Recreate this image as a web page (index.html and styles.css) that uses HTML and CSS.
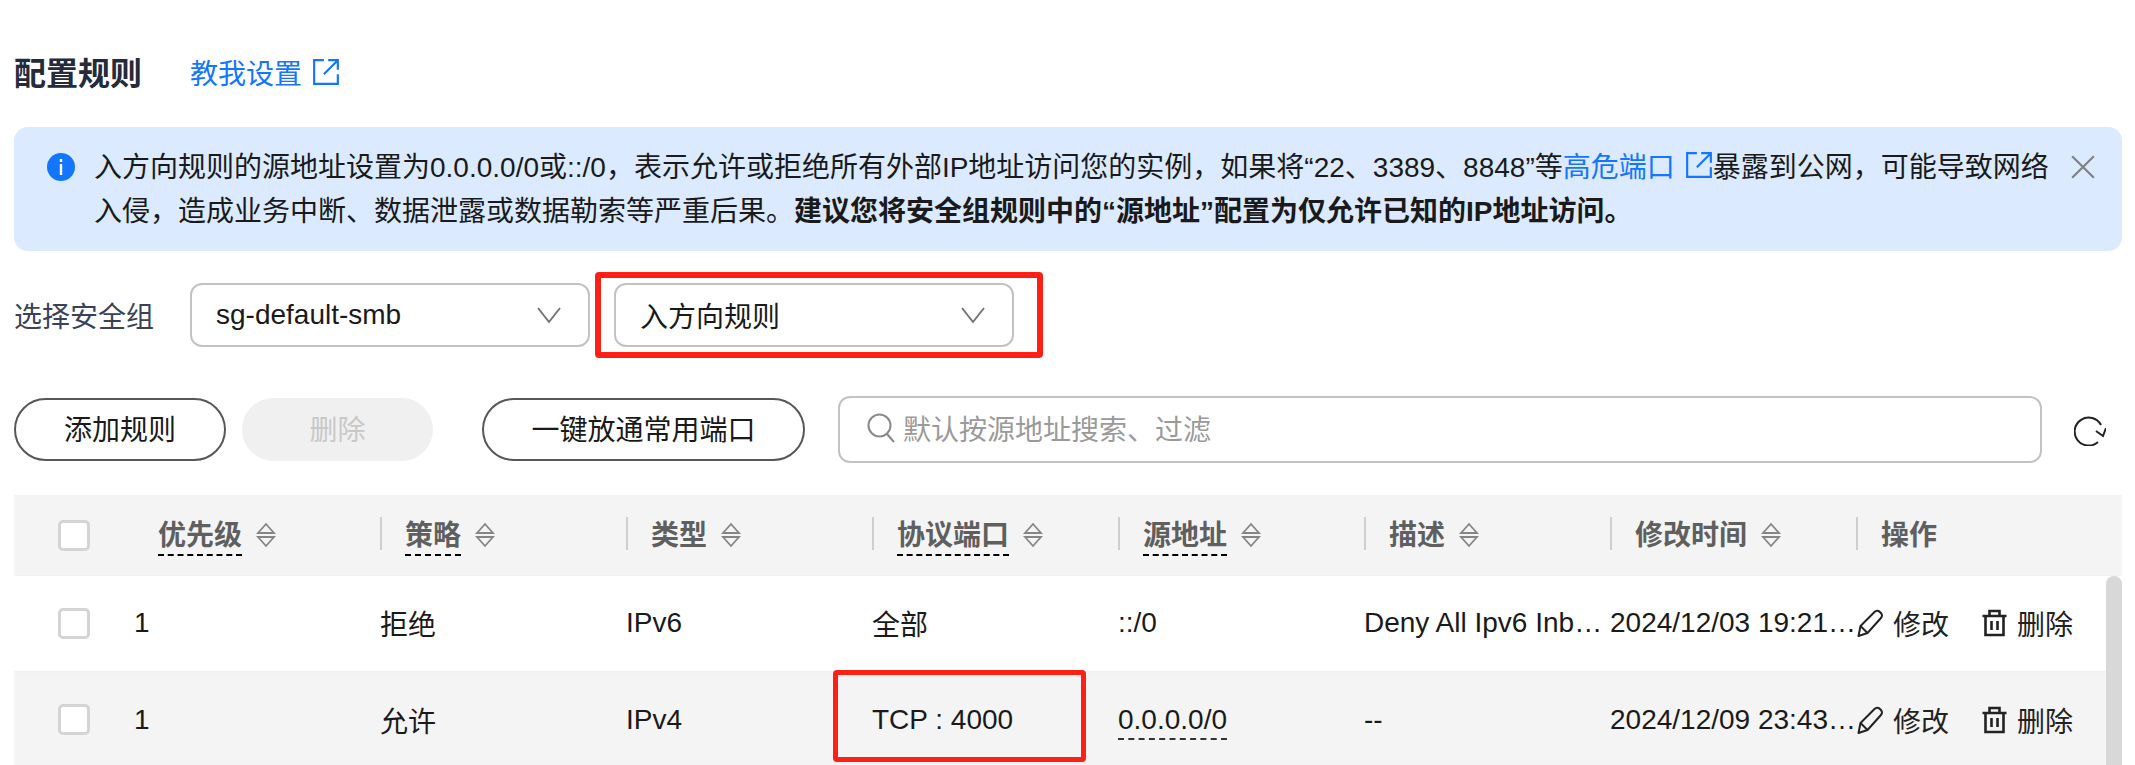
FILE: index.html
```html
<!DOCTYPE html>
<html lang="zh-CN">
<head>
    <meta charset="UTF-8">
    <title>配置规则</title>
    <link rel="stylesheet" href="styles.css">
</head>
<body>
    <svg class="defs" width="0" height="0" aria-hidden="true">
        <symbol id="i-ext" viewBox="0 0 26 26">
            <path d="M11 2H2v22h22v-9" fill="none" stroke="currentColor" stroke-width="2"/>
            <path d="M11 15 24 2M15 2h9v9" fill="none" stroke="currentColor" stroke-width="2"/>
        </symbol>
        <symbol id="i-sort" viewBox="0 0 20 26">
            <path d="M2 11 10 2l8 9zM2 15l8 9 8-9z" fill="none" stroke="#858585" stroke-width="1.8"/>
        </symbol>
        <symbol id="i-down" viewBox="0 0 26 18">
            <path d="M2 2l11 14L24 2" fill="none" stroke="#757575" stroke-width="2"/>
        </symbol>
        <symbol id="i-pen" viewBox="0 0 26 28">
            <path d="M1 27l2-10L17 3c2-2 4-1.500 6 .5s2 4 0 6L10 24z" fill="none" stroke="currentColor" stroke-width="2" stroke-linejoin="round"/>
            <path d="M3 17l7 7" fill="none" stroke="currentColor" stroke-width="2"/>
        </symbol>
        <symbol id="i-trash" viewBox="0 0 26 28">
            <path d="M1 7h24M8 7V2h10v5M4 7v19h18V7M10 12v9M16 12v9" fill="none" stroke="currentColor" stroke-width="2.600"/>
        </symbol>
    </svg>

    <div class="page">
        <div class="title-row">
            <h2>配置规则</h2>
            <a class="link" href="#">教我设置<svg class="ext"><use href="#i-ext"/></svg></a>
        </div>

        <div class="notice">
            <svg class="info" viewBox="0 0 28 28">
                <circle cx="14" cy="14" r="14" fill="#1476ff"/>
                <rect x="12.800" y="6" width="2.400" height="3" fill="#fff"/>
                <rect x="12.800" y="11" width="2.400" height="11" fill="#fff"/>
            </svg>
            <p>入方向规则的源地址设置为0.0.0.0/0或::/0，表示允许或拒绝所有外部IP地址访问您的实例，如果将“22、3389、8848”等<a class="link" href="#">高危端口<svg class="ext"><use href="#i-ext"/></svg></a>暴露到公网，可能导致网络入侵，造成业务中断、数据泄露或数据勒索等严重后果。<b>建议您将安全组规则中的“源地址”配置为仅允许已知的IP地址访问。</b></p>
            <svg class="close" viewBox="0 0 24 24">
                <path d="M2 2l20 20M22 2 2 22" fill="none" stroke="#808080" stroke-width="2"/>
            </svg>
        </div>

        <div class="filters">
            <label>选择安全组</label>
            <div class="select">sg-default-smb<svg><use href="#i-down"/></svg></div>
            <div class="select marked">入方向规则<svg><use href="#i-down"/></svg></div>
        </div>

        <div class="toolbar">
            <button class="btn btn-add">添加规则</button>
            <button class="btn btn-del" disabled>删除</button>
            <button class="btn btn-open">一键放通常用端口</button>
            <div class="search">
                <svg viewBox="0 0 28 30">
                    <circle cx="12.500" cy="12.500" r="11" fill="none" stroke="#8a8a8a" stroke-width="2"/>
                    <path d="M20 21l7 8" fill="none" stroke="#8a8a8a" stroke-width="2"/>
                </svg>
                默认按源地址搜索、过滤
            </div>
            <svg class="refresh" viewBox="0 0 32 30">
                <path d="M27 9A14 14 0 1 0 24 26" fill="none" stroke="#222" stroke-width="2"/>
                <path d="M22 15l7 5 3-8" fill="none" stroke="#222" stroke-width="2"/>
            </svg>
        </div>

        <div class="table-wrap">
            <table>
                <colgroup>
                    <col class="col-check">
                    <col class="col">
                    <col class="col">
                    <col class="col">
                    <col class="col">
                    <col class="col">
                    <col class="col">
                    <col class="col">
                    <col>
                </colgroup>
                <thead>
                    <tr>
                        <th><span class="check"></span></th>
                        <th class="first"><div class="th-in"><span class="tip">优先级</span><svg class="sort"><use href="#i-sort"/></svg></div></th>
                        <th><div class="th-in"><span class="tip">策略</span><svg class="sort"><use href="#i-sort"/></svg></div></th>
                        <th><div class="th-in"><span class="tip plain">类型</span><svg class="sort"><use href="#i-sort"/></svg></div></th>
                        <th><div class="th-in"><span class="tip">协议端口</span><svg class="sort"><use href="#i-sort"/></svg></div></th>
                        <th><div class="th-in"><span class="tip">源地址</span><svg class="sort"><use href="#i-sort"/></svg></div></th>
                        <th><div class="th-in"><span class="tip plain">描述</span><svg class="sort"><use href="#i-sort"/></svg></div></th>
                        <th><div class="th-in"><span class="tip plain">修改时间</span><svg class="sort"><use href="#i-sort"/></svg></div></th>
                        <th><div class="th-in"><span class="tip plain">操作</span></div></th>
                    </tr>
                </thead>
                <tbody>
                    <tr>
                        <td><span class="check"></span></td>
                        <td>1</td>
                        <td>拒绝</td>
                        <td>IPv6</td>
                        <td>全部</td>
                        <td>::/0</td>
                        <td>Deny All Ipv6 Inbound</td>
                        <td>2024/12/03 19:21:30 GMT+08:00</td>
                        <td>
                            <div class="actions">
                                <a><svg><use href="#i-pen"/></svg>修改</a>
                                <a><svg><use href="#i-trash"/></svg>删除</a>
                            </div>
                        </td>
                    </tr>
                    <tr>
                        <td><span class="check"></span></td>
                        <td>1</td>
                        <td>允许</td>
                        <td>IPv4</td>
                        <td class="marked-cell">TCP : 4000</td>
                        <td><span class="tip tip-cell">0.0.0.0/0</span></td>
                        <td>--</td>
                        <td>2024/12/09 23:43:12 GMT+08:00</td>
                        <td>
                            <div class="actions">
                                <a><svg><use href="#i-pen"/></svg>修改</a>
                                <a><svg><use href="#i-trash"/></svg>删除</a>
                            </div>
                        </td>
                    </tr>
                </tbody>
            </table>
            <div class="scrollbar"></div>
        </div>
    </div>
</body>
</html>
```

FILE: styles.css
```css
:root {
    --blue: #1476ff;
    --ink: #1a1a1a;
    --line: #c2c2c2;
    --red: #ff2015;
}

html, body {
    margin: 0;
    height: 100%;
    overflow: hidden;
}

body {
    background: #fff;
    color: var(--ink);
    font-family: "Liberation Sans", "Noto Sans CJK SC", sans-serif;
    font-size: 28px;
}

.defs {
    position: absolute;
}

.page {
    padding: 50px 13px 0 14px;
}

/* title */
.title-row {
    display: flex;
    align-items: center;
    height: 44px;
}

h2 {
    margin: 0 48px 3px 0;
    font-size: 32px;
    font-weight: 700;
    color: #252b3a;
}

.link {
    color: var(--blue);
    text-decoration: none;
}

.ext {
    width: 28px;
    height: 28px;
    margin-left: 10px;
    vertical-align: -2px;
}

/* notice */
.notice {
    display: flex;
    align-items: flex-start;
    height: 124px;
    margin-top: 33px;
    padding: 19px 26px 0 33px;
    box-sizing: border-box;
    background: #dbeaff;
    border-radius: 14px;
}

.notice p {
    flex: 1;
    margin: 0;
    line-height: 44px;
}

.info {
    flex: none;
    width: 28px;
    height: 28px;
    margin: 7px 19px 0 0;
}

.close {
    flex: none;
    width: 26px;
    height: 26px;
    margin: 8px 0 0 16px;
}

/* filters */
.filters {
    display: flex;
    align-items: center;
    margin-top: 32px;
}

.filters label {
    width: 176px;
    color: #3a4257;
}

.select {
    display: flex;
    align-items: center;
    justify-content: space-between;
    box-sizing: border-box;
    width: 400px;
    height: 64px;
    padding: 0 26px 0 24px;
    border: 2px solid var(--line);
    border-radius: 12px;
}

.select svg {
    width: 26px;
    height: 18px;
}

.marked {
    position: relative;
    margin-left: 24px;
}

.marked::after {
    content: "";
    position: absolute;
    inset: -13px -31px -13px -21px;
    border: 6px solid var(--red);
    border-radius: 4px;
}

/* toolbar */
.toolbar {
    display: flex;
    align-items: center;
    margin-top: 49px;
}

.btn {
    height: 63px;
    padding: 0 0 3px;
    font: inherit;
    color: var(--ink);
    background: #fff;
    border: 2px solid #575757;
    border-radius: 32px;
}

.btn-add {
    width: 212px;
    margin-right: 16px;
}

.btn-del {
    width: 191px;
    margin-right: 49px;
    color: #c8c8c8;
    background: #f0f0f0;
    border-color: #f0f0f0;
}

.btn-open {
    width: 323px;
}

.search {
    display: flex;
    align-items: center;
    box-sizing: border-box;
    width: 1204px;
    height: 67px;
    margin-left: 33px;
    padding: 0 0 3px 27px;
    color: #9a9a9a;
    border: 2px solid var(--line);
    border-radius: 12px;
}

.search svg {
    width: 28px;
    height: 30px;
    margin-right: 8px;
}

.refresh {
    width: 32px;
    height: 30px;
    margin: 3px 0 0 32px;
}

/* table */
.table-wrap {
    position: relative;
    margin-top: 32px;
}

table {
    width: 100%;
    table-layout: fixed;
    border-collapse: collapse;
}

.col-check {
    width: 120px;
}

.col {
    width: 246px;
}

th {
    position: relative;
    height: 80px;
    padding: 0 0 0 25px;
    text-align: left;
    font-weight: 700;
    color: #5f5f5f;
    background: #f4f4f4;
    border-bottom: 1px solid #f0f0f0;
}

th.first {
    padding-left: 24px;
}

th + th:not(.first)::before {
    content: "";
    position: absolute;
    left: 0;
    top: 22px;
    width: 2px;
    height: 33px;
    background: #cfcfcf;
}

th:first-child, td:first-child {
    padding: 0 0 0 44px;
}

.th-in {
    display: flex;
    align-items: center;
}

td {
    height: 96px;
    padding: 0;
    white-space: nowrap;
    overflow: hidden;
    text-overflow: ellipsis;
    box-sizing: border-box;
    border-bottom: 2px solid #f2f2f2;
}

tbody tr:nth-child(2) td {
    background: #f4f4f4;
}

.tip {
    display: inline-block;
    line-height: 36px;
    padding-top: 3px;
    border-bottom: 2px dashed #000;
}

.plain {
    border-bottom-color: transparent;
}

.tip-cell {
    border-bottom-color: #333;
}

.sort {
    width: 20px;
    height: 26px;
    margin-left: 14px;
}

.check {
    display: block;
    box-sizing: border-box;
    width: 32px;
    height: 31px;
    background: #fff;
    border: 3px solid #d4d4d4;
    border-radius: 5px;
}

.actions {
    display: flex;
    gap: 32px;
    padding-left: 1px;
}

.actions a {
    display: flex;
    align-items: center;
    gap: 9px;
    color: #222;
}

.actions svg {
    width: 27px;
    height: 28px;
}

/* annotations */
td.marked-cell {
    position: relative;
    overflow: visible;
}

.marked-cell::after {
    content: "";
    position: absolute;
    left: -39px;
    top: -3px;
    width: 243px;
    height: 82px;
    border: 5px solid var(--red);
    border-radius: 4px;
}

.scrollbar {
    position: absolute;
    right: 0;
    top: 81px;
    bottom: 0;
    width: 16px;
    background: #d8d8d8;
    border-radius: 8px 8px 0 0;
}
```
